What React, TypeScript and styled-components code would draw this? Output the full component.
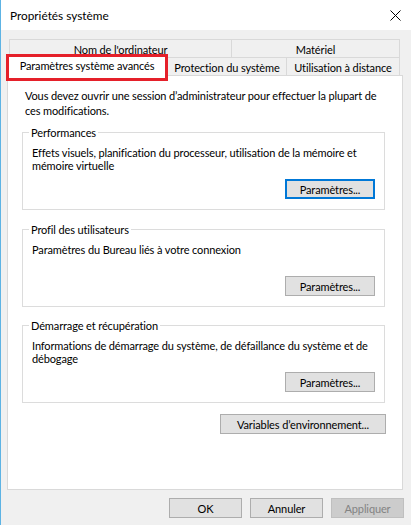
import React from 'react'
import { styled, createGlobalStyle } from 'styled-components'

const GlobalStyle = createGlobalStyle`
  body {
    margin: 0;
    background: #f0f0f0;
    font-family: Lato, "Liberation Sans", sans-serif;
    font-size: 11px;
    letter-spacing: -0.12px;
    color: #000;
  }
`

export default function App() {
  return (
    <>
      <GlobalStyle />
      <Window>
        <TitleBar>
          <Title>Propriétés système</Title>
          <CloseIcon width="11" height="11" viewBox="0 0 11 11">
            <path d="M0.5 0.5 L10.5 10.5 M10.5 0.5 L0.5 10.5" stroke="#000" strokeWidth="1" />
          </CloseIcon>
        </TitleBar>
        <Body>
          <TabStrip>
            <TopRow>
              <Tab $w={223}>Nom de l'ordinateur</Tab>
              <Tab $w={168}>Matériel</Tab>
            </TopRow>
            <BottomRow>
              <SelectedTab>Paramètres système avancés</SelectedTab>
              <Tab $w={120}>Protection du système</Tab>
              <Tab $w={113}>Utilisation à distance</Tab>
            </BottomRow>
            <Highlight />
          </TabStrip>
          <Panel>
            <Intro>
              Vous devez ouvrir une session d’administrateur pour effectuer la plupart de
              <br />
              ces modifications.
            </Intro>

            <Group $top={7}>
              <Legend>Performances</Legend>
              <Desc>
                Effets visuels, planification du processeur, utilisation de la mémoire et
                <br />
                mémoire virtuelle
              </Desc>
              <ButtonRow>
                <Button $w={90} $default>Paramètres...</Button>
              </ButtonRow>
            </Group>

            <Group $top={12}>
              <Legend>Profil des utilisateurs</Legend>
              <Desc>Paramètres du Bureau liés à votre connexion</Desc>
              <ButtonRow>
                <Button $w={90}>Paramètres...</Button>
              </ButtonRow>
            </Group>

            <Group $top={11}>
              <Legend>Démarrage et récupération</Legend>
              <Desc>
                Informations de démarrage du système, de défaillance du système et de
                <br />
                débogage
              </Desc>
              <ButtonRow>
                <Button $w={90}>Paramètres...</Button>
              </ButtonRow>
            </Group>

            <EnvRow>
              <Button $w={166}>Variables d’environnement...</Button>
            </EnvRow>
          </Panel>
        </Body>
        <Footer>
          <Button $w={73}>OK</Button>
          <Button $w={73}>Annuler</Button>
          <Button $w={73} disabled>Appliquer</Button>
        </Footer>
      </Window>
    </>
  )
}

const Window = styled.div`
  width: 411px;
  height: 525px;
  box-sizing: border-box;
  border-left: 1px solid #5db3e4;
  background: #f0f0f0;
  display: flex;
  flex-direction: column;
  overflow: hidden;
`

const TitleBar = styled.div`
  height: 30px;
  flex-shrink: 0;
  background: #fff;
  display: flex;
  align-items: center;
  justify-content: space-between;
  padding: 0 10px 0 9px;
`

const Title = styled.span`
  font-size: 11.8px;
  line-height: 15px;
  letter-spacing: 0;
`

const CloseIcon = styled.svg`
  display: block;
`

const Body = styled.div`
  flex: 1;
  display: flex;
  flex-direction: column;
  padding: 9px 8px 0 6px;
  min-height: 0;
`

const TabStrip = styled.div`
  position: relative;
  display: flex;
  flex-direction: column;
`

const TopRow = styled.div`
  display: flex;
  margin-left: 2px;
  height: 18px;
`

const BottomRow = styled.div`
  display: flex;
  height: 18px;
`

const Tab = styled.div<{ $w: number }>`
  width: ${p => p.$w}px;
  box-sizing: border-box;
  border: 1px solid #d9d9d9;
  border-bottom: none;
  background: #f0f0f0;
  display: flex;
  align-items: center;
  justify-content: center;
  white-space: nowrap;
  line-height: 15px;
  padding-top: 1px;

  & + & {
    border-left: none;
  }
`

const SelectedTab = styled.div`
  position: relative;
  z-index: 1;
  width: 160px;
  height: 21px;
  margin-top: -2px;
  box-sizing: border-box;
  border: 1px solid #d9d9d9;
  border-bottom: none;
  background: #fff;
  display: flex;
  align-items: center;
  justify-content: center;
  white-space: nowrap;
  line-height: 15px;
  padding-bottom: 1px;
`

const Highlight = styled.div`
  position: absolute;
  z-index: 2;
  left: -1px;
  top: 15px;
  width: 162px;
  height: 27px;
  box-sizing: border-box;
  border: 3px solid #e5202a;
  pointer-events: none;
`

const Panel = styled.div`
  flex: 1;
  background: #fff;
  border: 1px solid #d9d9d9;
  width: 396px;
  box-sizing: border-box;
  padding: 12px 17px 0 14px;
  display: flex;
  flex-direction: column;
`

const Intro = styled.div`
  padding-left: 3px;
  line-height: 15px;
  white-space: nowrap;
`

const Group = styled.fieldset<{ $top: number }>`
  margin: ${p => p.$top}px 0 0 0;
  padding: 6px 9px 10px 9px;
  border: 1px solid #dcdcdc;
  min-width: 0;
`

const Legend = styled.legend`
  margin-left: -3px;
  padding: 0 2px;
  line-height: 15px;
`

const Desc = styled.div`
  line-height: 13px;
  min-height: 28px;
  white-space: nowrap;
`

const ButtonRow = styled.div`
  display: flex;
  justify-content: flex-end;
  margin-top: 5px;
`

const EnvRow = styled.div`
  display: flex;
  justify-content: flex-end;
  margin-top: 11px;
  margin-right: -1px;
`

const Button = styled.button<{ $w: number; $default?: boolean }>`
  width: ${p => p.$w}px;
  height: 20px;
  box-sizing: border-box;
  padding: 0;
  margin: 0;
  font-family: inherit;
  font-size: 11px;
  letter-spacing: -0.12px;
  line-height: 15px;
  color: #000;
  background: #e1e1e1;
  border: ${p => (p.$default ? '2px solid #0078d7' : '1px solid #adadad')};

  &:disabled {
    background: #cccccc;
    border-color: #bfbfbf;
    color: #838383;
  }
`

const Footer = styled.div`
  display: flex;
  justify-content: flex-end;
  gap: 8px;
  padding: 8px 7px 7px 0;
`
